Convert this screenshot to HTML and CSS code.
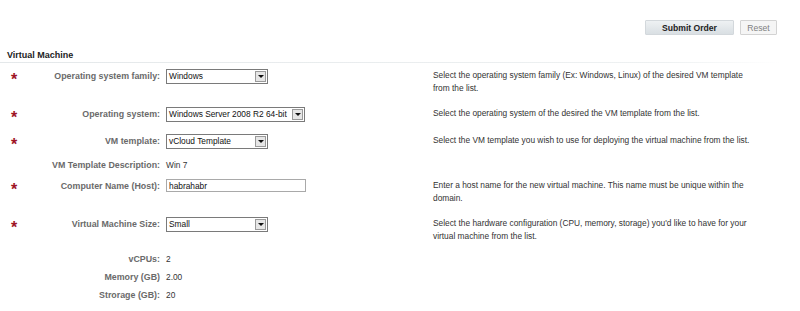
FILE: index.html
```html
<!DOCTYPE html>
<html lang="en">
<head>
    <meta charset="UTF-8">
    <meta name="viewport" content="width=device-width, initial-scale=1.0">
    <title>Virtual Machine Order</title>
    <link rel="stylesheet" href="styles.css">
</head>
<body>

<!-- Order actions -->
<div class="toolbar">
    <button class="btn btn-primary">Submit Order</button>
    <button class="btn btn-plain">Reset</button>
</div>

<h3 class="section-title">Virtual Machine</h3>

<div class="form">
    <div class="row">
        <span class="req">*</span>
        <label class="label">Operating system family:</label>
        <div class="field">
            <div class="select w-small"><span class="value">Windows</span><span class="arrow"></span></div>
        </div>
        <p class="help">Select the operating system family (Ex: Windows, Linux) of the desired VM template<br>from the list.</p>
    </div>

    <div class="row">
        <span class="req">*</span>
        <label class="label">Operating system:</label>
        <div class="field">
            <div class="select w-wide"><span class="value">Windows Server 2008 R2 64-bit</span><span class="arrow"></span></div>
        </div>
        <p class="help">Select the operating system of the desired the VM template from the list.</p>
    </div>

    <div class="row">
        <span class="req">*</span>
        <label class="label">VM template:</label>
        <div class="field">
            <div class="select w-small"><span class="value">vCloud Template</span><span class="arrow"></span></div>
        </div>
        <p class="help">Select the VM template you wish to use for deploying the virtual machine from the list.</p>
    </div>

    <div class="row info">
        <span class="req"></span>
        <label class="label">VM Template Description:</label>
        <div class="field">Win 7</div>
        <p class="help"></p>
    </div>

    <div class="row">
        <span class="req">*</span>
        <label class="label">Computer Name (Host):</label>
        <div class="field">
            <input class="text-input" type="text" value="habrahabr">
        </div>
        <p class="help">Enter a host name for the new virtual machine. This name must be unique within the<br>domain.</p>
    </div>

    <div class="row">
        <span class="req">*</span>
        <label class="label">Virtual Machine Size:</label>
        <div class="field">
            <div class="select w-small"><span class="value">Small</span><span class="arrow"></span></div>
        </div>
        <p class="help">Select the hardware configuration (CPU, memory, storage) you'd like to have for your<br>virtual machine from the list.</p>
    </div>

    <div class="row info">
        <span class="req"></span>
        <label class="label">vCPUs:</label>
        <div class="field">2</div>
        <p class="help"></p>
    </div>

    <div class="row info">
        <span class="req"></span>
        <label class="label">Memory (GB)</label>
        <div class="field">2.00</div>
        <p class="help"></p>
    </div>

    <div class="row info">
        <span class="req"></span>
        <label class="label">Strorage (GB):</label>
        <div class="field">20</div>
        <p class="help"></p>
    </div>
</div>

</body>
</html>
```

FILE: styles.css
```css
body {
    margin: 0;
    font-family: "Liberation Sans", Arial, sans-serif;
    font-size: 8.35px;
    color: #333;
    background: #fff;
}

/* Top buttons */
.toolbar {
    display: flex;
    justify-content: flex-end;
    gap: 6px;
    padding: 20px 23px 0 0;
}

.btn {
    font-family: inherit;
    font-size: 8.6px;
    height: 15px;
    padding: 0;
    border-radius: 1px;
    cursor: pointer;
}

.btn-primary {
    width: 89px;
    font-weight: bold;
    color: #222;
    background: linear-gradient(#eef1f3, #d9dfe3);
    border: 1px solid #d3d8dc;
}

.btn-plain {
    width: 37px;
    color: #7f7f7f;
    background: #f5f5f5;
    border: 1px solid #d3d3d3;
}

/* Section heading */
.section-title {
    margin: 15px 20px 0 0;
    padding: 0 0 2px 7px;
    font-size: 9px;
    font-weight: bold;
    color: #222;
    border-bottom: 1px solid;
    border-image: linear-gradient(to right, #e4e8ea, #eef1f2 85%, #fff) 1;
}

/* Form rows */
.row {
    display: grid;
    grid-template-columns: 27px 133px 273px 1fr;
    align-items: start;
    padding: 6px 0;
}

.row.info {
    padding: 4px 0 1px;
}

.req {
    padding: 3px 0 0 11px;
    color: #9e1426;
    font-size: 16px;
    font-weight: bold;
    line-height: 16px;
    height: 12px;
}

.row.info .req {
    height: 0;
    padding: 0;
}

.label {
    text-align: right;
    font-weight: bold;
    font-size: 8.85px;
    color: #6a6a6a;
    line-height: 15px;
}

.row.info .label,
.row.info .field {
    line-height: 13px;
}

.field {
    padding-left: 6px;
    line-height: 15px;
}

.help {
    margin: 0;
    line-height: 13px;
    white-space: nowrap;
}

/* Dropdown boxes */
.select {
    display: flex;
    align-items: center;
    height: 13px;
    border: 1px solid #7a7a7a;
    background: #fff;
    box-sizing: content-box;
}

.w-small { width: 100px; }
.w-wide { width: 137px; }

.select .value {
    flex: 1;
    padding-left: 2px;
    color: #111;
    white-space: nowrap;
    overflow: hidden;
}

.select .arrow {
    position: relative;
    width: 11px;
    height: 11px;
    margin-right: 1px;
    background: #e6e6e6;
    border: 1px solid #9a9a9a;
    box-sizing: border-box;
}

.select .arrow::after {
    content: "";
    position: absolute;
    left: 2px;
    top: 3px;
    border-left: 3px solid transparent;
    border-right: 3px solid transparent;
    border-top: 3px solid #111;
}

.text-input {
    display: block;
    width: 140px;
    height: 13px;
    margin: 0;
    padding: 0 2px;
    border: 1px solid #a9a9a9;
    font-family: inherit;
    font-size: 8.35px;
    color: #111;
    box-sizing: border-box;
}
```
